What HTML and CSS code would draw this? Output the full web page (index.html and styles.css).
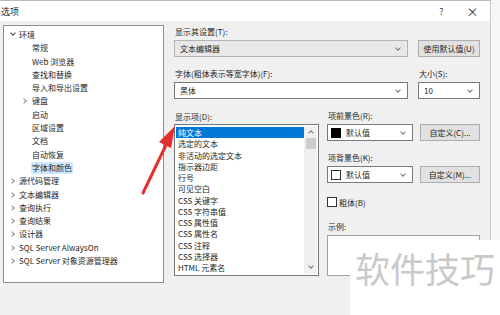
FILE: index.html
```html
<!DOCTYPE html>
<html lang="zh-CN">
<head>
  <meta charset="UTF-8" />
  <title>选项</title>
  <link rel="stylesheet" href="styles.css">
</head>
<body>
  <div class="window">
    <div class="titlebar">
      <span class="title">选项</span>
      <span class="tbtn help">?</span>
      <span class="tbtn close">×</span>
    </div>

    <div class="main">
      <div class="tree">
        <div class="node"><span class="chev down"></span>环境</div>
        <div class="node child">常规</div>
        <div class="node child">Web 浏览器</div>
        <div class="node child">查找和替换</div>
        <div class="node child">导入和导出设置</div>
        <div class="node child has"><span class="chev right"></span>键盘</div>
        <div class="node child">启动</div>
        <div class="node child">区域设置</div>
        <div class="node child">文档</div>
        <div class="node child">自动恢复</div>
        <div class="node child"><span class="sel">字体和颜色</span></div>
        <div class="node"><span class="chev right"></span>源代码管理</div>
        <div class="node"><span class="chev right"></span>文本编辑器</div>
        <div class="node"><span class="chev right"></span>查询执行</div>
        <div class="node"><span class="chev right"></span>查询结果</div>
        <div class="node"><span class="chev right"></span>设计器</div>
        <div class="node"><span class="chev right"></span>SQL Server AlwaysOn</div>
        <div class="node"><span class="chev right"></span>SQL Server 对象资源管理器</div>
      </div>

      <div class="settings">
        <div class="label">显示其设置(T):</div>
        <div class="row">
          <div class="select disabled wide">文本编辑器<span class="arrow"></span></div>
          <div class="button defaults">使用默认值(U)</div>
        </div>

        <div class="row labels">
          <div class="label wide">字体(粗体表示等宽字体)(F):</div>
          <div class="label size">大小(S):</div>
        </div>
        <div class="row">
          <div class="select wide">黑体<span class="arrow"></span></div>
          <div class="select size">10<span class="arrow"></span></div>
        </div>

        <div class="lower">
          <div class="items">
            <div class="label">显示项(D):</div>
            <div class="listbox">
              <div class="list">
                <div class="item active">纯文本</div>
                <div class="item">选定的文本</div>
                <div class="item">非活动的选定文本</div>
                <div class="item">指示器边距</div>
                <div class="item">行号</div>
                <div class="item">可见空白</div>
                <div class="item">CSS 关键字</div>
                <div class="item">CSS 字符串值</div>
                <div class="item">CSS 属性值</div>
                <div class="item">CSS 属性名</div>
                <div class="item">CSS 注释</div>
                <div class="item">CSS 选择器</div>
                <div class="item">HTML 元素名</div>
              </div>
              <div class="scrollbar">
                <span class="sarrow up"></span>
                <span class="thumb"></span>
                <span class="sarrow dn"></span>
              </div>
            </div>
          </div>

          <div class="colors">
            <div class="label">项前景色(R):</div>
            <div class="row">
              <div class="select color"><span class="swatch black"></span>默认值<span class="arrow"></span></div>
              <div class="button custom">自定义(C)...</div>
            </div>
            <div class="label gap">项背景色(K):</div>
            <div class="row">
              <div class="select color"><span class="swatch white"></span>默认值<span class="arrow"></span></div>
              <div class="button custom">自定义(M)...</div>
            </div>
            <label class="check"><span class="box"></span>粗体(B)</label>
            <div class="label sample-label">示例:</div>
            <div class="sample"></div>
          </div>
        </div>
      </div>
    </div>
  </div>

  <svg class="pointer" width="60" height="80" viewBox="0 0 60 80">
    <line x1="10" y1="75" x2="33" y2="27" stroke="#e2302f" stroke-width="3" stroke-linecap="round"/>
    <polygon points="42,8 26,24 38,30" fill="#e2302f"/>
  </svg>

  <div class="watermark">软件技巧</div>
</body>
</html>
```

FILE: styles.css
```css
* {
  margin: 0;
  padding: 0;
  box-sizing: border-box;
}

body {
  width: 500px;
  height: 315px;
  overflow: hidden;
  background: #f6f6f6;
  font-family: "Noto Sans CJK SC", "Noto Sans", sans-serif;
  font-size: 8px;
  color: #1f1f1f;
  position: relative;
}

.window {
  width: 491px;
  height: 315px;
  background: #f0f0f0;
  border-top: 1px solid #b9b9b9;
  border-right: 1px solid #c9c9c9;
}

/* title bar */
.titlebar {
  height: 20px;
  background: #fff;
  display: flex;
  align-items: center;
  font-size: 9px;
}

.title {
  padding-left: 1px;
  flex: 1;
}

.tbtn {
  width: 31px;
  text-align: center;
  color: #333;
}

.close {
  font-size: 12px;
  margin-right: 2px;
}

.main {
  display: flex;
  padding: 4px 0 0 3px;
}

/* tree */
.tree {
  width: 161px;
  height: 258px;
  background: #fff;
  border: 1px solid #8a8e96;
  padding-top: 2px;
}

.node {
  height: 13.3px;
  line-height: 13.3px;
  padding-left: 15px;
  position: relative;
  white-space: nowrap;
}

.node.child {
  padding-left: 28px;
}

.chev {
  position: absolute;
  top: 5px;
  left: 6px;
  width: 4px;
  height: 4px;
  border-right: 1px solid #8c8c8c;
  border-bottom: 1px solid #8c8c8c;
}

.chev.down {
  transform: rotate(45deg);
  top: 3px;
  left: 7px;
  border-color: #444;
}

.chev.right {
  transform: rotate(-45deg);
}

.node.has .chev {
  left: 18px;
}

.sel {
  background: #cce8ff;
  padding: 0 1px;
  margin-left: -1px;
  display: inline-block;
  line-height: 12px;
}

/* right side */
.settings {
  width: 306px;
  margin-left: 10px;
  padding-top: 1px;
}

.label {
  height: 12px;
  line-height: 12px;
  padding-left: 1px;
  white-space: nowrap;
}

.row {
  display: flex;
  justify-content: space-between;
  margin-top: 2px;
}

.row.labels {
  margin-top: 11px;
}

.row.labels .size {
  width: 62px;
}

.select {
  height: 17px;
  line-height: 15px;
  border: 1px solid #7a7a7a;
  background: #fff;
  padding-left: 5px;
  position: relative;
  display: flex;
  align-items: center;
}

.select.disabled {
  background: #e8e8e8;
  border-color: #b4b4b4;
}

.select.wide {
  width: 234px;
}

.select.size {
  width: 62px;
}

.arrow {
  position: absolute;
  right: 7px;
  top: 5px;
  width: 4px;
  height: 4px;
  border-right: 1px solid #777;
  border-bottom: 1px solid #777;
  transform: rotate(45deg);
}

.button {
  height: 17px;
  line-height: 15px;
  background: #e1e1e1;
  border: 1px solid #adadad;
  text-align: center;
  white-space: nowrap;
}

.button.defaults {
  width: 62px;
}

.lower {
  display: flex;
  margin-top: 12px;
  gap: 8px;
}

/* list of items */
.listbox {
  width: 145px;
  height: 152px;
  margin-top: 1px;
  border: 1px solid #7a7a7a;
  background: #fff;
  display: flex;
  padding: 1px;
}

.list {
  flex: 1;
  padding-top: 1px;
}

.item {
  height: 11.25px;
  line-height: 11.25px;
  padding-left: 2px;
  white-space: nowrap;
}

.item.active {
  background: #0078d7;
  color: #fff;
}

.scrollbar {
  width: 13px;
  background: #f0f0f0;
  position: relative;
}

.sarrow {
  position: absolute;
  left: 5px;
  width: 4px;
  height: 4px;
  border-left: 1px solid #777;
  border-top: 1px solid #777;
}

.sarrow.up {
  top: 5px;
  transform: rotate(45deg);
}

.sarrow.dn {
  bottom: 6px;
  transform: rotate(225deg);
}

.thumb {
  position: absolute;
  left: 2px;
  right: 1px;
  top: 12px;
  height: 11px;
  background: #cdcdcd;
}

/* colour column */
.colors {
  width: 153px;
}

.colors .label {
  margin-top: -1px;
}

.colors .row {
  margin-top: 2px;
}

.colors .label.gap {
  margin-top: 11px;
}

.select.color {
  width: 86px;
  padding-left: 3px;
}

.swatch {
  width: 10px;
  height: 10px;
  margin-right: 5px;
}

.swatch.black {
  background: #000;
}

.swatch.white {
  background: #fff;
  border: 1px solid #333;
}

.button.custom {
  width: 60px;
}

.check {
  display: flex;
  align-items: center;
  margin-top: 13px;
  height: 12px;
}

.box {
  width: 10px;
  height: 10px;
  border: 1px solid #333;
  background: #fff;
  margin-right: 2px;
}

.colors .label.sample-label {
  margin-top: 13px;
}

.sample {
  height: 41px;
  margin-top: 2px;
  border: 1px solid #a0a0a0;
  background: #fff;
}

/* overlays */
.pointer {
  position: absolute;
  left: 133px;
  top: 118px;
}

.watermark {
  position: absolute;
  left: 350px;
  top: 240px;
  width: 150px;
  height: 75px;
  background: #fff;
  color: #c9c9c9;
  font-size: 35px;
  line-height: 1;
  padding: 10px 0 0 5px;
  white-space: nowrap;
}
```
